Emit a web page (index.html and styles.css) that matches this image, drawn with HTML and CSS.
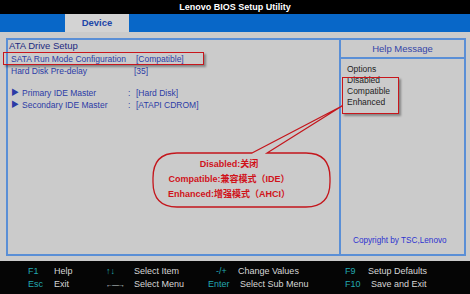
FILE: index.html
```html
<!DOCTYPE html>
<html>
<head>
<meta charset="utf-8">
<link rel="stylesheet" href="styles.css">
</head>
<body>
<div class="screen">
  <div class="title">Lenovo BIOS Setup Utility</div>
  <div class="menubar"><div class="tab">Device</div></div>
  <div class="main">
    <div class="frame">
      <div class="left">
        <div class="section">ATA Drive Setup</div>
        <div class="items">
          <div class="row"><span class="label">SATA Run Mode Configuration</span><span class="val v1">[Compatible]</span></div>
          <div class="row"><span class="label">Hard Disk Pre-delay</span><span class="val v2">[35]</span></div>
        </div>
        <div class="items sub">
          <div class="row"><span class="tri">&#9654;</span><span class="label sublabel">Primary IDE Master</span><span class="colon">:</span><span class="val">[Hard Disk]</span></div>
          <div class="row"><span class="tri">&#9654;</span><span class="label sublabel">Secondary IDE Master</span><span class="colon">:</span><span class="val">[ATAPI CDROM]</span></div>
        </div>
      </div>
      <div class="help">
        <div class="help-head">Help Message</div>
        <div class="help-body">
          <div>Options</div>
          <div>Disabled</div>
          <div>Compatible</div>
          <div>Enhanced</div>
        </div>
        <div class="copyright">Copyright by TSC,Lenovo</div>
      </div>
    </div>
  </div>
  <div class="footer">
    <span class="key">F1</span><span class="desc">Help</span><span class="key">&#8593;&#8595;</span><span class="desc">Select Item</span><span class="key k-pm">-/+</span><span class="desc">Change Values</span><span class="key">F9</span><span class="desc">Setup Defaults</span>
    <span class="key">Esc</span><span class="desc">Exit</span><span class="key arrows">&#8592;&#8212;&#8594;</span><span class="desc">Select Menu</span><span class="key">Enter</span><span class="desc d-sub">Select Sub Menu</span><span class="key">F10</span><span class="desc d-save">Save and Exit</span>
  </div>

  <div class="redbox box-sata"></div>
  <div class="redbox box-opts"></div>
  <svg class="callout-shape" width="470" height="294" viewBox="0 0 470 294">
    <path d="M 252 153 L 342 106 L 267 153 H 306 Q 330 153 330 178 V 182 Q 330 207 306 207 H 177 Q 153 207 153 182 V 178 Q 153 153 177 153 Z" fill="#cbcbcb" stroke="#c4161c" stroke-width="1.3"/>
  </svg>
  <div class="callout-text">
    <div>Disabled:关闭</div>
    <div>Compatible:兼容模式（IDE）</div>
    <div>Enhanced:增强模式（AHCI）</div>
  </div>
</div>
</body>
</html>
```
FILE: styles.css
```css
* { box-sizing: border-box; }
html, body { margin: 0; padding: 0; }
body {
  width: 470px;
  height: 294px;
  overflow: hidden;
  font-family: "Liberation Sans", Arial, "Noto Sans CJK SC", sans-serif;
  background: #cbcbcb;
}
.screen {
  position: relative;
  width: 470px;
  height: 294px;
  display: flex;
  flex-direction: column;
}
.title {
  height: 14px;
  background: #000;
  color: #fff;
  font-weight: bold;
  font-size: 9px;
  line-height: 14px;
  text-align: center;
}
.menubar {
  height: 18px;
  background: #0867c8;
  padding-left: 65px;
  display: flex;
}
.tab {
  width: 64px;
  background: #d3d3d3;
  color: #1d46a8;
  font-weight: bold;
  font-size: 9.5px;
  line-height: 18px;
  text-align: center;
}
.main {
  height: 229px;
  padding: 6px 4px 0 6px;
  background: #cbcbcb;
}
.frame {
  height: 218px;
  border: 2px solid #5a8fd6;
  display: flex;
}
.left {
  flex: 1;
  padding-left: 1px;
}
.section {
  font-size: 9.5px;
  line-height: 11px;
  color: #1c2a80;
}
.items {
  margin-top: 2px;
  padding-left: 2px;
}
.items.sub { margin-top: 10px; }
.row {
  display: flex;
  height: 12px;
  line-height: 12px;
  font-size: 8.5px;
  color: #2b3ba6;
}
.label { width: 125px; }
.val.v1 { padding-left: 0; }
.v2 { margin-left: -2px; }
.tri {
  width: 11px;
  font-size: 8px;
  color: #2b3ba6;
}
.sublabel { width: 106px; }
.colon { width: 8px; }
.help {
  width: 125px;
  border-left: 2px solid #5a8fd6;
  display: flex;
  flex-direction: column;
}
.help-head {
  height: 19px;
  border-bottom: 2px solid #5a8fd6;
  color: #3444a8;
  font-size: 9.5px;
  line-height: 17px;
  text-align: center;
}
.help-body {
  padding: 5px 0 0 6px;
  font-size: 8.5px;
  line-height: 11px;
  color: #1e1e1e;
}
.copyright {
  margin-top: auto;
  padding: 0 0 8px 12px;
  font-size: 8.2px;
  line-height: 10px;
  color: #2e34d0;
}
.footer {
  flex: 1;
  background: #050505;
  padding: 4px 0 0 28px;
  display: grid;
  grid-template-columns: 26px 52px 28px 74px 30px 107px 23px auto;
  grid-auto-rows: 13px;
  font-size: 9px;
  line-height: 13px;
  color: #d6d6d6;
  white-space: nowrap;
}
.key { color: #22a8b0; }
.k-pm { padding-left: 8px; }
.arrows { font-size: 7px; color: #cfd8dc; letter-spacing: -1px; }
.d-sub { padding-left: 2px; }
.d-save { padding-left: 3px; }

.redbox {
  position: absolute;
  border: 1.5px solid #c8161c;
  box-shadow: 2px 2px 2px rgba(0,0,0,0.35);
}
.box-sata { left: 3px; top: 52px; width: 201px; height: 13px; }
.box-opts { left: 342px; top: 77px; width: 57px; height: 37px; }
.callout-shape {
  position: absolute;
  left: 0;
  top: 0;
}
.callout-text {
  position: absolute;
  left: 153px;
  top: 157px;
  width: 152px;
  text-align: center;
  color: #d0121a;
  font-weight: bold;
  font-size: 9px;
  line-height: 15px;
}
```
